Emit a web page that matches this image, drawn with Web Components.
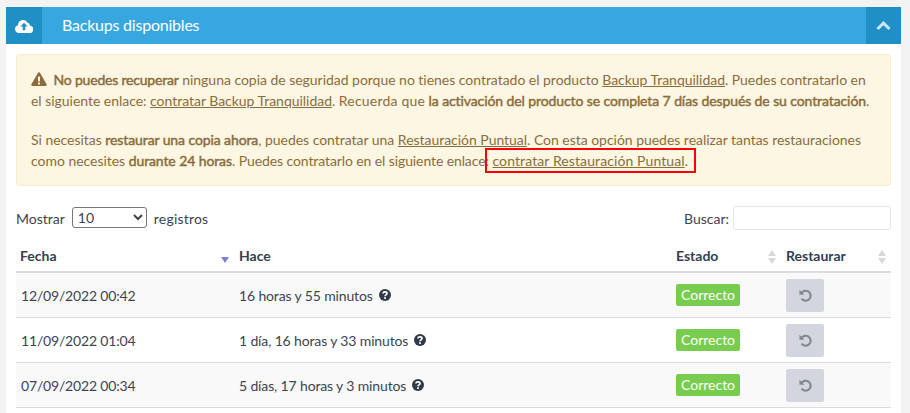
<!DOCTYPE html>
<html lang="es">
<head>
<meta charset="utf-8">
<title>Backups disponibles</title>
<style>
  html, body { height: 100%; }
  body {
    margin: 0;
    height: 413px;
    overflow: hidden;
    background: #f3f3f3;
    font: 400 14px/21px Lato, "Open Sans", sans-serif;
    color: #3b4450;
  }
  notice-box a { color: inherit; text-decoration: underline; }
  notice-box b { font-weight: 400; letter-spacing: -0.1px; -webkit-text-stroke: 0.45px currentColor; }
  notice-box b.lead { letter-spacing: -0.2px; }
  notice-box .wide { letter-spacing: 0.2px; }
  notice-box .tight { letter-spacing: -0.1px; }
  .marked { position: relative; letter-spacing: 0.1px; }
  .marked::after {
    content: '';
    position: absolute;
    left: -7px; right: -8px; top: -4px; bottom: -4px;
    border: 2px solid #f00;
  }
</style>
</head>
<body>
<backup-panel title-text="Backups disponibles">
  <notice-box>
    <p>
      <svg width="16" height="14" viewBox="0 0 16 14" style="vertical-align:-1px;margin-right:3px"><path fill="#8a6d3b" fill-rule="evenodd" d="M8 .3c.5 0 .9.3 1.100.7l6.500 11.200c.5.8-.1 1.800-1.100 1.800H1.500c-1 0-1.600-1-1.100-1.800L6.900 1C7.100.6 7.500.3 8 .3zM6.900 4.400l.2 5h1.800l.2-5H6.900zM7 10.400v2h2v-2H7z"/></svg>
      <b class="lead">No puedes recuperar</b> ninguna copia de seguridad porque no tienes contratado el producto <a>Backup Tranquilidad</a>. Puedes contratarlo en<br>el siguiente enlace: <a>contratar Backup Tranquilidad</a>. <span class="wide">Recuerda que</span> <b>la activación del producto se completa 7 días después de su contratación</b>.
    </p>
    <p>
      Si necesitas <b>restaurar una copia ahora</b>, puedes contratar una <a>Restauración Puntual</a>. Con esta opción puedes realizar tantas restauraciones<br>como necesites <b>durante 24 horas</b>. <span class="tight">Puedes contratarlo en el siguiente enlace:</span> <span class="marked"><a>contratar Restauración Puntual</a>.</span>
    </p>
  </notice-box>
  <table-tools></table-tools>
  <backup-head></backup-head>
  <backup-row date="12/09/2022 00:42" ago="16 horas y 55 minutos" striped></backup-row>
  <backup-row date="11/09/2022 01:04" ago="1 día, 16 horas y 33 minutos"></backup-row>
  <backup-row date="07/09/2022 00:34" ago="5 días, 17 horas y 3 minutos" striped></backup-row>
</backup-panel>

<script>
  const COLUMNS = 'grid-template-columns: 219px 437px 110px 109px;';

  class BackupPanel extends HTMLElement {
    constructor() {
      super();
      this.attachShadow({ mode: 'open' });
    }

    connectedCallback() {
      this.shadowRoot.innerHTML = `
        <style>
          :host { display: block; margin: 7px 9px 0 6px; background: #fff; padding-bottom: 5px; }
          header { display: flex; align-items: stretch; height: 37px; background: #38a7df; color: #fff; }
          .side { flex: none; display: flex; align-items: center; justify-content: center; background: #1f8fc6; }
          .icon { width: 36px; }
          .toggle { width: 35px; }
          h2 { flex: 1; margin: 0; padding-left: 20px; font: 400 16px/36px Lato, sans-serif; letter-spacing: -0.22px; }
          .body { padding: 10px 10px 0; }
        </style>
        <header>
          <span class="side icon">
            <svg width="18" height="14" viewBox="0 0 18 14"><path fill="#fff" d="M4 14A3.900 3.900 0 0 1 3.100 6.300 5 5 0 0 1 12.300 3.400 3 3 0 0 1 14.800 6.400 3.800 3.800 0 0 1 14 14z"/><path fill="#1f8fc6" d="M9 3.800 12.600 7.500H10.300V11.300H7.700V7.500H5.400z"/></svg>
          </span>
          <h2>${this.getAttribute('title-text')}</h2>
          <span class="side toggle">
            <svg width="15" height="10" viewBox="0 0 15 10"><path fill="none" stroke="#cbe7f6" stroke-width="3" d="M1.500 8 7.500 2.200 13.500 8"/></svg>
          </span>
        </header>
        <div class="body"><slot></slot></div>
      `;
    }
  }

  class NoticeBox extends HTMLElement {
    constructor() {
      super();
      this.attachShadow({ mode: 'open' });
      this.shadowRoot.innerHTML = `
        <style>
          :host {
            display: block;
            box-sizing: border-box;
            height: 132px;
            padding: 14px 14px 0;
            background: #fcf6e2;
            border: 1px solid #f8ecd0;
            border-radius: 3px;
            color: #8a6d3b;
            letter-spacing: -0.03px;
            white-space: nowrap;
          }
          ::slotted(p) { margin: 0 0 18px; }
        </style>
        <slot></slot>
      `;
    }
  }

  class TableTools extends HTMLElement {
    constructor() {
      super();
      this.attachShadow({ mode: 'open' });
      this.shadowRoot.innerHTML = `
        <style>
          :host { display: flex; justify-content: space-between; align-items: center; margin-top: 20px; height: 24px; }
          label { display: flex; align-items: center; gap: 6px; }
          select {
            width: 75px; height: 21px; margin: 0 1px 2px;
            padding: 0 0 0 1px;
            background: #fff; color: #3b4450;
            border: 1px solid #767676; border-radius: 3px;
            font: 400 14px Lato, sans-serif;
          }
          input {
            box-sizing: border-box; width: 158px; height: 24px; padding: 0 6px;
            background: #fff;
            border: 1px solid #e3e5ee; border-radius: 2px;
          }
          .find { gap: 4px; }
          .after { letter-spacing: 0.2px; }
        </style>
        <label>Mostrar <select><option>10</option></select> <span class="after">registros</span></label>
        <label class="find">Buscar: <input type="search"></label>
      `;
    }
  }

  class BackupHead extends HTMLElement {
    constructor() {
      super();
      this.attachShadow({ mode: 'open' });
      this.shadowRoot.innerHTML = `
        <style>
          :host {
            display: grid; ${COLUMNS}
            box-sizing: border-box;
            height: 38px; margin-top: 5px; padding-top: 10px;
            border-bottom: 2px solid #ddd;
            font-weight: 700;
            color: #34404f;
          }
          div { position: relative; padding-left: 4px; }
          svg { position: absolute; top: 5px; }
        </style>
        <div>Fecha<svg style="top:12px;right:6px" width="8" height="6" viewBox="0 0 8 6"><path fill="#7b7fd6" d="M0 0h8L4 6z"/></svg></div>
        <div>Hace</div>
        <div>Estado${BackupHead.sortIcon('right:6px')}</div>
        <div>Restaurar${BackupHead.sortIcon('right:5px')}</div>
      `;
    }

    static sortIcon(pos) {
      return `<svg style="${pos}" width="8" height="14" viewBox="0 0 8 14"><path fill="#d6d8dc" d="M4 0 8 6H0zM0 8h8l-4 6z"/></svg>`;
    }
  }

  class BackupRow extends HTMLElement {
    constructor() {
      super();
      this.attachShadow({ mode: 'open' });
    }

    connectedCallback() {
      this.shadowRoot.innerHTML = `
        <style>
          :host {
            display: grid; ${COLUMNS}
            align-items: center;
            box-sizing: border-box;
            height: 45px;
            border-bottom: 1px solid #ddd;
            background: ${this.hasAttribute('striped') ? '#f9f9f9' : '#fff'};
          }
          div { display: flex; align-items: center; padding-left: 4px; }
          .date { padding-left: 5px; letter-spacing: -0.17px; }
          .ago { gap: 6px; letter-spacing: -0.14px; }
          .badge {
            padding: 0 5px; height: 22px; line-height: 22px;
            background: #78cc4e; color: #fff; border-radius: 2px;
          }
          button {
            display: flex; align-items: center; justify-content: center;
            width: 38px; height: 33px; padding: 0;
            background: #d3d6de; border: 0; border-radius: 2px;
          }
        </style>
        <div class="date">${this.getAttribute('date')}</div>
        <div class="ago">
          <span>${this.getAttribute('ago')}</span>
          <svg width="12" height="12" viewBox="0 0 12 12"><circle cx="6" cy="6" r="6" fill="#2f3b4a"/><path fill="none" stroke="#fff" stroke-width="1.700" d="M3.900 4.500C4 3.400 4.900 2.900 6 2.900 7.200 2.900 8 3.600 8 4.500 8 5.900 6 5.800 6 7.300"/><rect x="5.100" y="8.200" width="1.800" height="1.700" fill="#fff"/></svg>
        </div>
        <div><span class="badge">Correcto</span></div>
        <div>
          <button aria-label="Restaurar">
            <svg width="13" height="13" viewBox="0 0 12 12"><path fill="none" stroke="#85888f" stroke-width="2" d="M2 4.200A4.600 4.600 0 1 1 2.400 8.900"/><path fill="#85888f" d="M.4 .6 5 5.200H.4z"/></svg>
          </button>
        </div>
      `;
    }
  }

  customElements.define('backup-panel', BackupPanel);
  customElements.define('notice-box', NoticeBox);
  customElements.define('table-tools', TableTools);
  customElements.define('backup-head', BackupHead);
  customElements.define('backup-row', BackupRow);
</script>
</body>
</html>
